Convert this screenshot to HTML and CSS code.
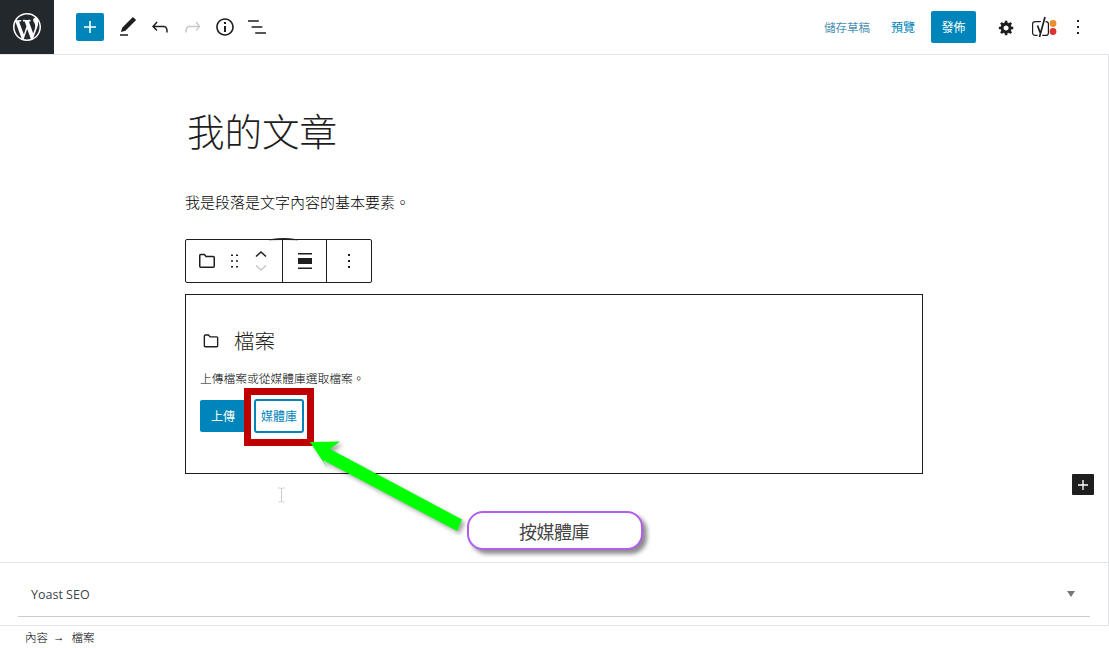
FILE: index.html
```html
<!DOCTYPE html>
<html lang="zh-Hant">
<head>
<meta charset="utf-8">
<title>我的文章</title>
<link rel="stylesheet" href="styles.css">
</head>
<body>
<div class="app">
  <header class="topbar">
    <div class="logo">
      <svg width="28" height="28" viewBox="0 0 20 20"><path fill="#fff" d="M20 10c0-5.51-4.49-10-10-10C4.48 0 0 4.49 0 10c0 5.52 4.48 10 10 10 5.51 0 10-4.48 10-10zM7.78 15.37L4.37 6.22c.55-.02 1.17-.08 1.17-.08.5-.06.44-1.13-.06-1.11 0 0-1.45.11-2.37.11-.18 0-.37 0-.58-.01C4.12 2.69 6.87 1.11 10 1.11c2.33 0 4.45.87 6.05 2.34-.68-.11-1.65.39-1.65 1.58 0 .74.45 1.36.9 2.1.35.61.55 1.36.55 2.46 0 1.49-1.4 5-1.4 5l-3.03-8.37c.54-.02.82-.17.82-.17.5-.05.44-1.25-.06-1.22 0 0-1.44.12-2.38.12-.87 0-2.33-.12-2.33-.12-.5-.03-.56 1.2-.06 1.22l.92.08 1.26 3.41zM17.41 10c.24-.64.74-1.87.43-4.25.7 1.29 1.05 2.71 1.05 4.25 0 3.29-1.73 6.24-4.4 7.78.97-2.59 1.94-5.2 2.92-7.78zM6.1 18.09C3.12 16.65 1.11 13.53 1.11 10c0-1.3.23-2.48.72-3.59C3.25 10.3 4.67 14.2 6.1 18.09zm4.03-6.63l2.58 6.98c-.86.29-1.76.45-2.71.45-.79 0-1.57-.11-2.29-.33.81-2.38 1.62-4.74 2.42-7.1z"/></svg>
    </div>
    <div class="tools">
      <span class="add-btn"><svg width="24" height="24" viewBox="0 0 24 24"><path fill="#fff" d="M18 11.2h-5.2V6h-1.6v5.2H6v1.6h5.2V18h1.6v-5.2H18z"/></svg></span>
      <svg class="tool" width="24" height="24" viewBox="0 0 24 24"><path d="M20.1 5.1L16.9 2 6.2 12.7l-1.3 4.4 4.5-1.3L20.1 5.1zM4 20.8h8v-1.5H4v1.5z"/></svg>
      <svg class="tool" width="24" height="24" viewBox="0 0 24 24"><path d="M18.3 11.7c-.6-.6-1.4-.9-2.3-.9H6.7l2.9-3.3-1.1-1-4.5 5L8.5 16l1-1-2.7-2.7H16c.5 0 .9.2 1.3.5 1 1 1 3.4 1 4.5v.3h1.5v-.2c0-1.5 0-4.3-1.5-5.7z"/></svg>
      <svg class="tool tool-off" width="24" height="24" viewBox="0 0 24 24"><path d="M15.6 6.5l-1.1 1 2.9 3.3H8c-.9 0-1.7.3-2.3.9-1.4 1.5-1.4 4.2-1.4 5.6v.2h1.5v-.3c0-1.1 0-3.5 1-4.5.3-.3.7-.5 1.3-.5h9.2L14.5 15l1 1.1 4-4.6-3.9-5z"/></svg>
      <svg class="tool" width="24" height="24" viewBox="0 0 24 24"><path d="M12 3.2c-4.8 0-8.8 3.9-8.8 8.8 0 4.8 3.9 8.8 8.8 8.8 4.8 0 8.8-3.9 8.8-8.8 0-4.8-4-8.8-8.8-8.8zm0 16c-4 0-7.2-3.3-7.2-7.2C4.8 8 8 4.8 12 4.8s7.2 3.3 7.2 7.2c0 4-3.2 7.2-7.2 7.2zM11 17h2v-6h-2v6zm0-8h2V7h-2v2z"/></svg>
      <svg class="tool" width="24" height="24" viewBox="0 0 24 24"><path d="M13.8 5.2H3v1.5h10.8V5.2zm-3.6 12v1.5H21v-1.5H10.2zm7.2-6H6.6v1.5h10.8v-1.5z"/></svg>
    </div>
    <div class="actions">
      <span class="link link-muted">儲存草稿</span>
      <span class="link">預覽</span>
      <span class="publish">發佈</span>
      <svg class="gear" width="17" height="17" viewBox="0 0 20 20"><path fill="#1e1e1e" d="M18 12h-2.18c-.17.7-.44 1.35-.81 1.93l1.54 1.54-2.1 2.1-1.54-1.54c-.58.36-1.23.63-1.91.79V19H8v-2.18c-.68-.16-1.33-.43-1.91-.79l-1.54 1.54-2.12-2.12 1.54-1.54c-.36-.58-.63-1.23-.79-1.91H1V9.03h2.17c.16-.7.44-1.35.8-1.94L2.43 5.55l2.1-2.1 1.54 1.54c.58-.37 1.24-.64 1.93-.81V2h3v2.18c.68.16 1.33.43 1.91.79l1.54-1.54 2.12 2.12-1.54 1.54c.36.59.64 1.24.8 1.94H18V12zm-8.5 1.5c1.66 0 3-1.34 3-3s-1.34-3-3-3-3 1.34-3 3 1.34 3 3 3z"/></svg>
      <svg class="yoast" width="28" height="22" viewBox="0 0 28 22">
        <rect x="1.600" y="5.600" width="15.800" height="13.800" rx="2.500" fill="none" stroke="#1e1e1e" stroke-width="1.200"/>
        <path d="M13.500 0L8.500 21" stroke="#fff" stroke-width="4.500"/>
        <path d="M6.500 9.500l3 8M14 1L8.500 21" fill="none" stroke="#1e1e1e" stroke-width="1.700"/>
        <circle cx="22" cy="7.500" r="3.400" fill="#ee8d2d"/>
        <circle cx="22" cy="15.500" r="3.400" fill="#dc3232"/>
      </svg>
      <svg class="more" width="24" height="24" viewBox="0 0 24 24"><path fill="#1e1e1e" d="M13 19h-2v-2h2v2zm0-6h-2v-2h2v2zm0-6h-2V5h2v2z"/></svg>
    </div>
  </header>

  <main class="main">
    <div class="column">
      <h1 class="post-title">我的文章</h1>
      <p class="para">我是段落是文字內容的基本要素。</p>
      <div class="block-toolbar">
        <div class="tb-group tb-main">
          <svg width="24" height="24" viewBox="0 0 24 24"><path fill="none" stroke="#1e1e1e" stroke-width="1.5" d="M4.75 6.5a1 1 0 0 1 1-1h3.6l1.7 2h7.2a1 1 0 0 1 1 1v8.75a1 1 0 0 1-1 1H5.75a1 1 0 0 1-1-1z"/></svg>
          <svg class="drag" width="18" height="24" viewBox="0 0 18 24"><path fill="#1e1e1e" d="M6 7h2V5.500H6zM6 12.800h2v-1.600H6zM6 18.500h2V17H6zM11 7h2V5.500h-2zM11 12.800h2v-1.600h-2zM11 18.500h2V17h-2z"/></svg>
          <div class="movers">
            <svg width="16" height="10" viewBox="0 0 16 10"><path fill="none" stroke="#1e1e1e" stroke-width="1.5" d="M3 7.500l5-4.500 5 4.500"/></svg>
            <svg width="16" height="10" viewBox="0 0 16 10"><path fill="none" stroke="#c4c8cc" stroke-width="1.500" d="M3 2.500l5 4.500 5-4.500"/></svg>
          </div>
        </div>
        <div class="tb-group tb-align">
          <svg width="24" height="24" viewBox="0 0 24 24"><path fill="#1e1e1e" d="M5 5.500h14V4H5zM5 20h14v-1.500H5zM5 9h14v6H5z"/></svg>
        </div>
        <div class="tb-group tb-more">
          <svg width="24" height="24" viewBox="0 0 24 24"><path fill="#1e1e1e" d="M13 19h-2v-2h2v2zm0-6h-2v-2h2v2zm0-6h-2V5h2v2z"/></svg>
        </div>
      </div>
      <section class="file-block">
        <div class="file-label">
          <svg width="24" height="24" viewBox="0 0 24 24"><path fill="none" stroke="#1e1e1e" stroke-width="1.5" d="M4.750 6.500a1 1 0 0 1 1-1h3.600l1.700 2h7.200a1 1 0 0 1 1 1v8.750a1 1 0 0 1-1 1H5.750a1 1 0 0 1-1-1z"/></svg>
          <span>檔案</span>
        </div>
        <p class="file-help">上傳檔案或從媒體庫選取檔案。</p>
        <div class="file-actions">
          <span class="btn-upload">上傳</span>
          <span class="btn-media">媒體庫</span>
        </div>
      </section>
    </div>
    <span class="inserter"><svg width="20" height="20" viewBox="0 0 24 24"><path fill="#fff" d="M18 11.200h-5.200V6h-1.600v5.200H6v1.600h5.200V18h1.600v-5.200H18z"/></svg></span>
  </main>

  <section class="meta-panel">
    <div class="meta-head">
      <span>Yoast SEO</span>
      <i class="caret"></i>
    </div>
  </section>
  <footer class="crumbs">
    <span>內容</span><span class="crumb-arrow">→</span><span>檔案</span>
  </footer>

  <div class="annot-box"></div>
  <svg class="annot-arrow" width="200" height="110" viewBox="0 0 200 110">
    <path fill="#00ff00" d="M3 3L33 2.500 23 10 155 80.500 150 92 16 21 21 30z"/>
  </svg>
  <div class="annot-note">按媒體庫</div>
  <svg class="ibeam" width="9" height="16" viewBox="0 0 9 16"><path fill="none" stroke="#c9c9c9" d="M1.500 1h2l1 1 1-1h2M4.500 2v12M1.500 15h2l1-1 1 1h2"/></svg>
</div>
</body>
</html>
```
FILE: styles.css
```css
* { box-sizing: border-box; }
html, body { margin: 0; padding: 0; background: #fff; }
body {
  width: 1109px;
  height: 648px;
  overflow: hidden;
  color: #1e1e1e;
  font-family: "Open Sans", "Noto Sans CJK TC", sans-serif;
}
.app { position: relative; display: flex; flex-direction: column; width: 1109px; height: 648px; }
svg { display: block; flex: none; }

.topbar { display: flex; align-items: flex-start; height: 55px; border-bottom: 1px solid #e2e4e7; flex: none; }
.logo { display: flex; align-items: center; justify-content: center; width: 54px; height: 54px; background: #23282d; }
.tools { display: flex; align-items: center; height: 54px; margin-left: 22px; }
.add-btn { display: flex; align-items: center; justify-content: center; width: 28px; height: 28px; background: #0085ba; border-radius: 2px; margin-right: 12px; }
.tool { margin-right: 8.300px; fill: #1e1e1e; }
.tool-off { fill: #c5c8cb; }
.actions { display: flex; align-items: center; height: 54px; margin-left: auto; padding-right: 19px; }
.link { font-size: 12px; color: #0085ba; margin-right: 16px; }
.link-muted { margin-right: 21px; font-size: 11.500px; color: #4b8fb0; }
.publish { display: flex; align-items: center; justify-content: center; width: 45px; height: 32px; margin-right: 21.500px; background: #0085ba; color: #fff; font-size: 12px; border-radius: 2px; }
.gear { margin-right: 16.500px; }
.yoast { margin-right: 7px; }

.main { position: relative; flex: 1; min-height: 0; border-right: 1px solid #e2e4e7; }
.column { width: 738px; margin: 0 0 0 185px; padding-top: 47px; }
.post-title { margin: 0; padding-left: 2px; font-size: 37.500px; line-height: 60px; font-weight: 300; color: #1e1e1e; }
.para { margin: 28px 0 0; font-size: 15px; line-height: 24px; font-weight: 300; color: #000; }

.block-toolbar { position: relative; display: flex; width: 187px; height: 44px; margin-top: 25px; border: 1px solid #1e1e1e; border-radius: 2px; background: #fff; }
.block-toolbar::before { content: ""; position: absolute; left: 83px; top: -2px; width: 29px; height: 3px; border-top: 2px solid #1e1e1e; border-radius: 50% 50% 0 0; }
.tb-group { display: flex; align-items: center; height: 100%; }
.tb-main { width: 97px; padding-left: 9px; border-right: 1px solid #1e1e1e; }
.drag { margin-left: 6px; }
.movers { display: flex; flex-direction: column; gap: 4px; margin-left: 10px; }
.tb-align { justify-content: center; width: 44px; border-right: 1px solid #1e1e1e; }
.tb-more { justify-content: center; flex: 1; }

.file-block { height: 180px; margin-top: 11px; padding: 34px 14px 0; border: 1px solid #1e1e1e; }
.file-label { display: flex; align-items: center; height: 24px; font-size: 20.500px; font-weight: 300; }
.file-label span { margin-left: 12px; line-height: 24px; }
.file-label svg { width: 22px; height: 22px; }
.file-help { margin: 17px 0 0; font-size: 11.750px; line-height: 16px; font-weight: 300; color: #000; }
.file-actions { display: flex; align-items: center; margin-top: 13px; }
.btn-upload { display: flex; align-items: center; justify-content: center; width: 46px; height: 32px; background: #0085ba; color: #fff; font-size: 12px; border-radius: 2px; }
.btn-media { display: flex; align-items: center; justify-content: center; width: 50px; height: 34px; margin-left: 8px; border: 2px solid #0085ba; border-radius: 3px; color: #0085ba; font-size: 12px; background: #fff; }

.inserter { position: absolute; left: 1072px; top: 419px; display: flex; align-items: center; justify-content: center; width: 22px; height: 21px; background: #1e1e1e; border-radius: 1px; }

.meta-panel { flex: none; height: 64px; padding: 0 18px; border-top: 1px solid #e2e4e7; border-right: 1px solid #e2e4e7; border-bottom: 1px solid #e2e4e7; }
.meta-head { display: flex; align-items: center; justify-content: space-between; height: 54px; padding: 9px 15px 0 13px; width: 1072px; border-bottom: 1px solid #ccc; font-size: 12.500px; color: #3c434a; }
.caret { width: 0; height: 0; border-left: 4.500px solid transparent; border-right: 4.500px solid transparent; border-top: 6px solid #72777c; }
.crumbs { flex: none; display: flex; align-items: center; height: 22px; padding-left: 25px; font-size: 11.500px; color: #000; font-weight: 300; }
.crumb-arrow { margin: 0 7px 0 5px; font-family: "Liberation Sans", sans-serif; font-weight: 700; }

.annot-box { position: absolute; left: 244px; top: 388px; width: 70px; height: 58px; border: 7px solid #c00000; }
.annot-arrow { position: absolute; left: 307px; top: 439px; filter: drop-shadow(3px 3px 2px rgba(0,0,0,.35)); }
.annot-note { position: absolute; left: 467px; top: 511px; display: flex; align-items: center; justify-content: center; width: 176px; height: 39px; padding-right: 2px; background: #fff; border: 2px solid #b35cf0; border-radius: 16px; box-shadow: 4px 4px 4px rgba(0,0,0,.45); font-size: 18px; letter-spacing: -.500px; color: #444; }
.ibeam { position: absolute; left: 277px; top: 487px; }
```
